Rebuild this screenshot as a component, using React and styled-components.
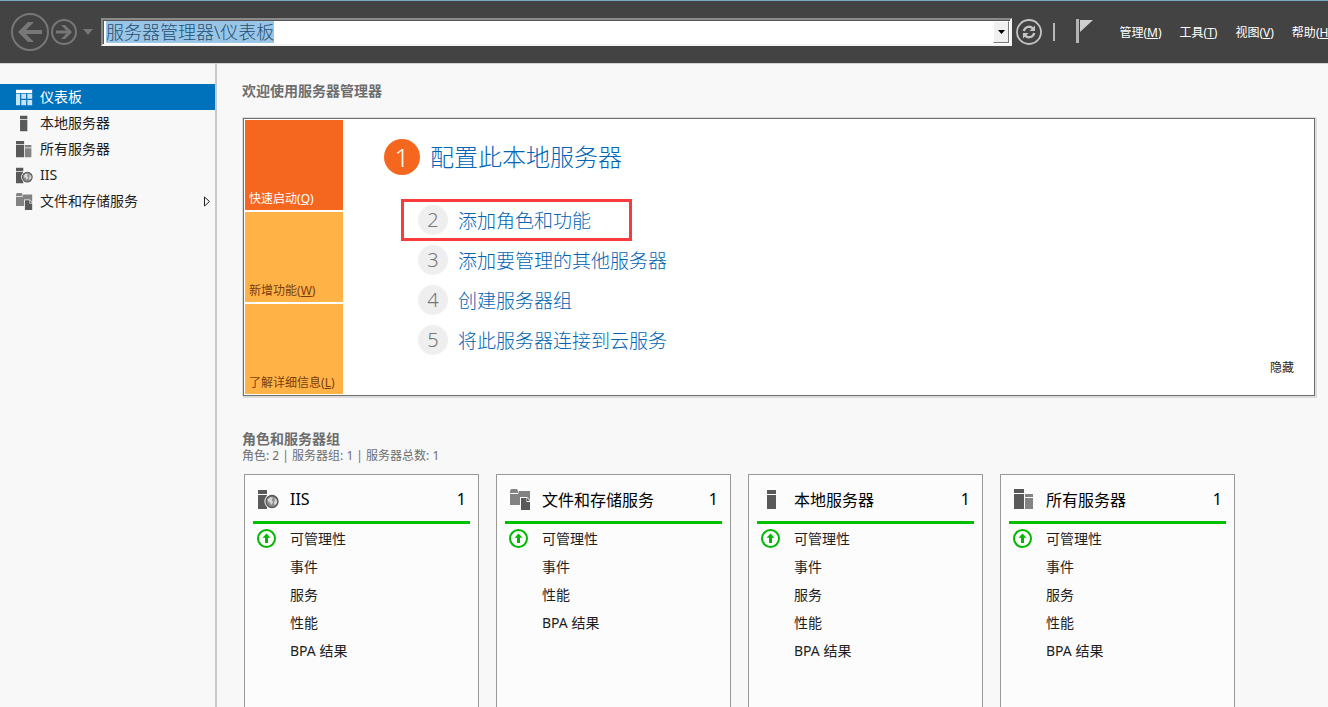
import React, { useState } from 'react';
import styled, { createGlobalStyle, css } from 'styled-components';

const GlobalStyle = createGlobalStyle`
  * {
    box-sizing: border-box;
  }
  body {
    margin: 0;
    background: #f8f8f8;
    color: #1e1e1e;
    font-family: "Noto Sans", "Noto Sans CJK SC", sans-serif;
    font-size: 14px;
  }
  button, input {
    font-family: inherit;
    border: none;
    padding: 0;
    margin: 0;
    background: none;
  }
  a {
    color: inherit;
    text-decoration: none;
  }
  svg {
    display: block;
  }
`;

const Shell = styled.div`
  height: 100vh;
  display: flex;
  flex-direction: column;
  overflow: hidden;
`;

const Header = styled.header`
  flex: none;
  height: 64px;
  display: flex;
  align-items: center;
  padding-left: 11px;
  background: #434343;
  border-top: 1px solid #75a9c4;
  border-bottom: 1px solid #d4d4d4;
  overflow: hidden;
`;

const IconButton = styled.button`
  flex: none;
  margin-right: ${props => props.$gap || 0}px;
`;

const AddressBar = styled.div`
  flex: 1;
  min-width: 0;
  height: 28px;
  display: flex;
  align-items: center;
  justify-content: space-between;
  margin-right: 4px;
  background: white;
  border: 2px solid;
  border-color: #8a8a8a #f4f4f4 #f4f4f4 #8a8a8a;
  box-shadow: inset 1px 1px 0 #555;
  padding: 1px 1px 1px 3px;
`;

// the path is selected, so the tint only covers the text itself
const Address = styled.input`
  field-sizing: content;
  height: 22px;
  line-height: 22px;
  font-size: 18px;
  font-weight: 300;
  color: #234f74;
  background: #99c6e6;
  outline: none;
`;

const DropButton = styled.button`
  width: 16px;
  height: 22px;
  display: grid;
  place-items: center;
  background: #f0f0f0;
  border: 1px solid;
  border-color: #fff #777 #777 #fff;
`;

const Divider = styled.span`
  flex: none;
  width: 2px;
  height: 18px;
  background: #b8b8b8;
  margin: 0 21px 0 11px;
`;

const Menu = styled.nav`
  flex: none;
  display: flex;
  gap: 18px;
  margin-left: 26px;
  margin-right: -4px;
  font-size: 12px;
  color: white;
  white-space: nowrap;
`;

const Body = styled.div`
  flex: 1;
  min-height: 0;
  display: flex;
`;

const Sidebar = styled.nav`
  flex: none;
  width: 217px;
  padding-top: 20px;
  border-right: 2px solid #cacaca;
`;

const SideItem = styled.a`
  height: 26px;
  display: grid;
  grid-template-columns: 24px 1fr auto;
  align-items: center;
  padding: 0 4px 0 16px;
  line-height: 26px;
  ${props => props.$active && css`
    background: #0072bc;
    color: white;
  `}
`;

const Main = styled.main`
  flex: 1;
  min-width: 0;
  padding: 18px 13px 0 25px;
  overflow: hidden;
`;

const Heading = styled.h2`
  margin: 0;
  font-size: 14px;
  line-height: 18px;
  color: #6e6e6e;
`;

const Summary = styled.p`
  margin: 0;
  font-size: 12px;
  line-height: 16px;
  color: #6e6e6e;
`;

const Welcome = styled.section`
  display: flex;
  margin: 18px 0 34px 1px;
  padding: 1px;
  background: white;
  border: 1px solid #6e6e6e;
  box-shadow: 0 0 0 1px #dcdcdc, 1px 1px 0 1px #dcdcdc;
`;

const Tiles = styled.div`
  flex: none;
  width: 98px;
  display: grid;
  grid-auto-rows: 90px;
  gap: 2px;
`;

const Tile = styled.button`
  display: flex;
  align-items: flex-end;
  padding: 0 0 2px 4px;
  font-size: 12px;
  line-height: 18px;
  white-space: nowrap;
  background: ${props => props.$active ? '#f5671f' : '#ffb347'};
  color: ${props => props.$active ? 'white' : '#7a3d10'};
`;

const Steps = styled.div`
  flex: 1;
  padding: 19px 0 0 41px;
  font-weight: 300;
  color: #0064b4;
`;

const Circle = styled.span`
  flex: none;
  display: grid;
  place-items: center;
  width: ${props => props.$main ? 36 : 30}px;
  height: ${props => props.$main ? 36 : 30}px;
  border-radius: 50%;
  font-size: ${props => props.$main ? 26 : 20}px;
  line-height: 30px;
  background: ${props => props.$main ? '#f5671f' : '#efefef'};
  color: ${props => props.$main ? 'white' : '#777'};
`;

const MainStep = styled.a`
  display: flex;
  align-items: center;
  gap: 10px;
  font-size: 24px;
  line-height: 36px;
`;

const StepList = styled.div`
  display: flex;
  flex-direction: column;
  align-items: flex-start;
  padding: 25px 0 0 34px;
`;

const Step = styled.a`
  position: relative;
  height: 40px;
  display: flex;
  align-items: center;
  gap: 10px;
  font-size: 19px;
`;

const Marker = styled.span`
  position: absolute;
  left: -17px;
  top: -1px;
  width: 231px;
  height: 42px;
  border: 3px solid #f93b3b;
`;

const HideButton = styled.button`
  align-self: flex-end;
  margin: 0 19px 17px 0;
  font-size: 12px;
  line-height: 18px;
  color: #1e1e1e;
`;

const Cards = styled.div`
  display: flex;
  flex-wrap: wrap;
  gap: 17px;
  margin: 10px 0 0 2px;
`;

const CardBox = styled.section`
  width: 235px;
  min-height: 260px;
  padding: 0 8px;
  background: #fcfcfc;
  border: 1px solid #999;
`;

const CardHead = styled.header`
  height: 49px;
  display: grid;
  grid-template-columns: 32px 1fr auto;
  align-items: center;
  margin-bottom: 1px;
  padding: 2px 4px 0 5px;
  border-bottom: 3px solid #00c000;
  font-size: 16px;
  color: black;
`;

const CardTitle = styled.h3`
  margin: 0;
  font-size: 16px;
  font-weight: 400;
`;

const CardRow = styled.a`
  height: 28px;
  display: grid;
  grid-template-columns: 33px 1fr;
  align-items: center;
  padding-left: 4px;
  line-height: 28px;
`;

const Globe = () => (
  <g>
    <circle cx="14" cy="12.500" r="7.600" fill="#fcfcfc" />
    <circle cx="14" cy="12.500" r="6" fill="#8a8a8a" stroke="#555" strokeWidth="1.300" />
    <path d="M9.500 10.500l3-2.500 2.500 1-1.300 2 1.500 2-1.800 3-1.400-2.400-2-1zM16.500 9l2.300 2 .2 3-2.300 2.200-1-2.200 1-1.800z" fill="#d4d4d4" />
  </g>
);

const icons = {
  dashboard: (
    <g>
      <path d="M0 1h20v4H0z" fill="#fff" />
      <path d="M0 6h5v14H0zM6.500 6h6v6h-6zM14 6h6v6h-6zM6.500 13.500h6V20h-6zM14 13.500h6V20h-6z" fill="#c8e2f6" />
    </g>
  ),
  server: <path d="M5 1h9v4H5zM5 6h9v14H5z" fill="#595959" />,
  servers: (
    <g>
      <path d="M0 0h10v4H0zM0 5h10v15H0z" fill="#595959" />
      <path d="M11 5h8v3h-8zM11 9h8v11h-8z" fill="#838383" />
    </g>
  ),
  iis: (
    <g>
      <path d="M0 1h9v4H0zM0 6h9v14H0z" fill="#595959" />
      <Globe />
    </g>
  ),
  files: (
    <g>
      <path d="M0 2l1-2h6l1 2v2H0zM0 5h8l1-3h11v14H0z" fill="#838383" />
      <path d="M10 8h7l4 4v9H10z" fill="#fcfcfc" />
      <path d="M11 9h5.500v4H20v8h-9z" fill="#595959" />
      <path d="M17 9l3 3h-3z" fill="#595959" />
    </g>
  ),
};

const RoleIcon = ({ name, size }) => (
  <svg width={size} height={size} viewBox="0 0 21 21" aria-hidden="true">{icons[name]}</svg>
);

const BackIcon = () => (
  <svg width="38" height="38" viewBox="0 0 38 38" fill="none" stroke="#777">
    <circle cx="19" cy="19" r="18" strokeWidth="2" />
    <path d="M31 19H10" strokeWidth="4" />
    <path d="M17 9h6L13 19l10 10h-6L7 19z" fill="#777" stroke="none" />
  </svg>
);

const ForwardIcon = () => (
  <svg width="26" height="26" viewBox="0 0 26 26" fill="none" stroke="#777">
    <circle cx="13" cy="13" r="12" strokeWidth="2" />
    <path d="M5 13h14" strokeWidth="3" />
    <path d="M14 6H10L17 13l-7 7h4L21 13z" fill="#777" stroke="none" />
  </svg>
);

const RefreshIcon = () => (
  <svg width="26" height="26" viewBox="0 0 26 26" fill="none" stroke="#c4c4c4">
    <circle cx="13" cy="13" r="12" strokeWidth="1.800" />
    <path d="M7.800 12a5.300 5.300 0 0 1 9-2.600M18.200 14a5.300 5.300 0 0 1-9 2.600" strokeWidth="2.300" />
    <path d="M19 6.500V12h-5.500zM7 19.500V14h5.500z" fill="#c4c4c4" stroke="none" />
  </svg>
);

const FlagIcon = () => (
  <svg width="17" height="26" viewBox="0 0 17 26">
    <path d="M0 0h3v24H0z" fill="#b4b4b4" />
    <path d="M4 1h13L4 13z" fill="#d0d0d0" />
  </svg>
);

const UpIcon = () => (
  <svg width="19" height="21" viewBox="0 0 19 21">
    <circle cx="9.500" cy="9.500" r="8.500" fill="#fff" stroke="#00b800" strokeWidth="2" />
    <path d="M9.500 4.500l4 4.300h-2.500V14H8V8.800H5.500z" fill="#00b800" />
  </svg>
);

const menus = [['管理', 'M'], ['工具', 'T'], ['视图', 'V'], ['帮助', 'H']];

const sideItems = [
  { icon: 'dashboard', label: '仪表板', active: true },
  { icon: 'server', label: '本地服务器' },
  { icon: 'servers', label: '所有服务器' },
  { icon: 'iis', label: 'IIS' },
  { icon: 'files', label: '文件和存储服务', expands: true },
];

const tiles = [['快速启动', 'Q'], ['新增功能', 'W'], ['了解详细信息', 'L']];

const steps = ['添加角色和功能', '添加要管理的其他服务器', '创建服务器组', '将此服务器连接到云服务'];

const cards = [
  { icon: 'iis', title: 'IIS', rows: ['可管理性', '事件', '服务', '性能', 'BPA 结果'] },
  { icon: 'files', title: '文件和存储服务', rows: ['可管理性', '事件', '性能', 'BPA 结果'] },
  { icon: 'server', title: '本地服务器', rows: ['可管理性', '事件', '服务', '性能', 'BPA 结果'] },
  { icon: 'servers', title: '所有服务器', rows: ['可管理性', '事件', '服务', '性能', 'BPA 结果'] },
];

const Card = ({ icon, title, rows }) => (
  <CardBox>
    <CardHead>
      <RoleIcon name={icon} size={21} />
      <CardTitle>{title}</CardTitle>
      <span>1</span>
    </CardHead>
    {rows.map((row, i) => (
      <CardRow href="#" key={row}>
        <span>{i === 0 ? <UpIcon /> : null}</span>
        <span>{row}</span>
      </CardRow>
    ))}
  </CardBox>
);

const App = () => {
  const [path, setPath] = useState('服务器管理器\\仪表板');
  const [tile, setTile] = useState('Q');

  return (
    <Shell>
      <GlobalStyle />
      <Header>
        <IconButton aria-label="后退" $gap={2}><BackIcon /></IconButton>
        <IconButton aria-label="前进" $gap={6}><ForwardIcon /></IconButton>
        <IconButton aria-label="历史记录" $gap={8}>
          <svg width="10" height="6" viewBox="0 0 10 6"><path d="M0 0h10L5 6z" fill="#777" /></svg>
        </IconButton>
        <AddressBar>
          <Address aria-label="地址" value={path} onChange={e => setPath(e.target.value)} />
          <DropButton aria-label="展开">
            <svg width="7" height="4" viewBox="0 0 7 4"><path d="M0 0h7L3.500 4z" fill="#000" /></svg>
          </DropButton>
        </AddressBar>
        <IconButton aria-label="刷新"><RefreshIcon /></IconButton>
        <Divider />
        <IconButton aria-label="通知"><FlagIcon /></IconButton>
        <Menu>
          {menus.map(([label, key]) => (
            <a href="#" key={key}>{label}(<u>{key}</u>)</a>
          ))}
        </Menu>
      </Header>
      <Body>
        <Sidebar>
          {sideItems.map(item => (
            <SideItem href="#" key={item.label} $active={item.active}>
              <RoleIcon name={item.icon} size={17} />
              <span>{item.label}</span>
              {item.expands ? (
                <svg width="8" height="11" viewBox="0 0 8 11"><path d="M1.500 1v9l5-4.500z" fill="none" stroke="#222" /></svg>
              ) : null}
            </SideItem>
          ))}
        </Sidebar>
        <Main>
          <Heading>欢迎使用服务器管理器</Heading>
          <Welcome>
            <Tiles>
              {tiles.map(([label, key]) => (
                <Tile key={key} $active={tile === key} onClick={() => setTile(key)}>
                  <span>{label}(<u>{key}</u>)</span>
                </Tile>
              ))}
            </Tiles>
            <Steps>
              <MainStep href="#"><Circle $main>1</Circle>配置此本地服务器</MainStep>
              <StepList>
                {steps.map((step, i) => (
                  <Step href="#" key={step}>
                    <Circle>{i + 2}</Circle>
                    {step}
                    {i === 0 ? <Marker /> : null}
                  </Step>
                ))}
              </StepList>
            </Steps>
            <HideButton>隐藏</HideButton>
          </Welcome>
          <Heading>角色和服务器组</Heading>
          <Summary>角色: 2 | 服务器组: 1 | 服务器总数: 1</Summary>
          <Cards>
            {cards.map(card => <Card key={card.title} {...card} />)}
          </Cards>
        </Main>
      </Body>
    </Shell>
  );
}

export default App;
